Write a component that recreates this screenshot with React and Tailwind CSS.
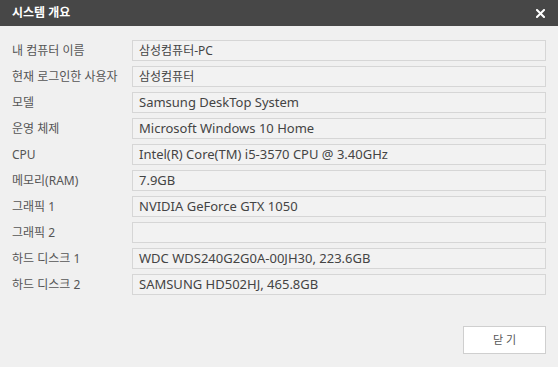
import React from "react";

const rows = [
  ["내 컴퓨터 이름", "삼성컴퓨터-PC"],
  ["현재 로그인한 사용자", "삼성컴퓨터"],
  ["모델", "Samsung DeskTop System"],
  ["운영 체제", "Microsoft Windows 10 Home"],
  ["CPU", "Intel(R) Core(TM) i5-3570 CPU @ 3.40GHz"],
  ["메모리(RAM)", "7.9GB"],
  ["그래픽 1", "NVIDIA GeForce GTX 1050"],
  ["그래픽 2", ""],
  ["하드 디스크 1", "WDC WDS240G2G0A-00JH30, 223.6GB"],
  ["하드 디스크 2", "SAMSUNG HD502HJ, 465.8GB"],
];

const hangul = /[\uac00-\ud7a3]/;

export default function App() {
  return (
    <div
      className="w-[558px] h-[367px] bg-[#f0f0f0] flex flex-col overflow-hidden"
      style={{ fontFamily: '"Noto Sans", "Noto Sans CJK KR", sans-serif' }}
    >
      <div className="h-[26px] bg-[#474747] flex items-center justify-between pl-[12px] pr-[13px] shrink-0">
        <span className="text-white text-[12px] font-bold leading-none">시스템 개요</span>
        <svg width="9" height="9" viewBox="0 0 9 9">
          <path d="M1 1L8 8M8 1L1 8" stroke="#fff" strokeWidth="2" strokeLinecap="square" />
        </svg>
      </div>
      <div className="flex flex-col gap-[5px] pt-[14px] pl-[12px] pr-[12px]">
        {rows.map(([label, value]) => (
          <div key={label} className="flex items-center h-[21px]">
            <div className="w-[120px] text-[12px] text-[#555] leading-none">{label}</div>
            <div
              className={
                hangul.test(value)
                  ? "flex-1 h-[21px] border border-[#d6d6d6] bg-[#f2f2f2] flex items-center pl-[6px] text-[12px] text-[#444] leading-none"
                  : "flex-1 h-[21px] border border-[#d6d6d6] bg-[#f2f2f2] flex items-center pl-[6px] text-[13px] text-[#444] leading-none"
              }
            >
              {value}
            </div>
          </div>
        ))}
      </div>
      <div className="flex justify-end pr-[12px] pt-[31px]">
        <button className="w-[83px] h-[28px] bg-white border border-[#cfcfcf] text-[11px] text-[#555] flex items-center justify-center">
          닫 기
        </button>
      </div>
    </div>
  );
}
